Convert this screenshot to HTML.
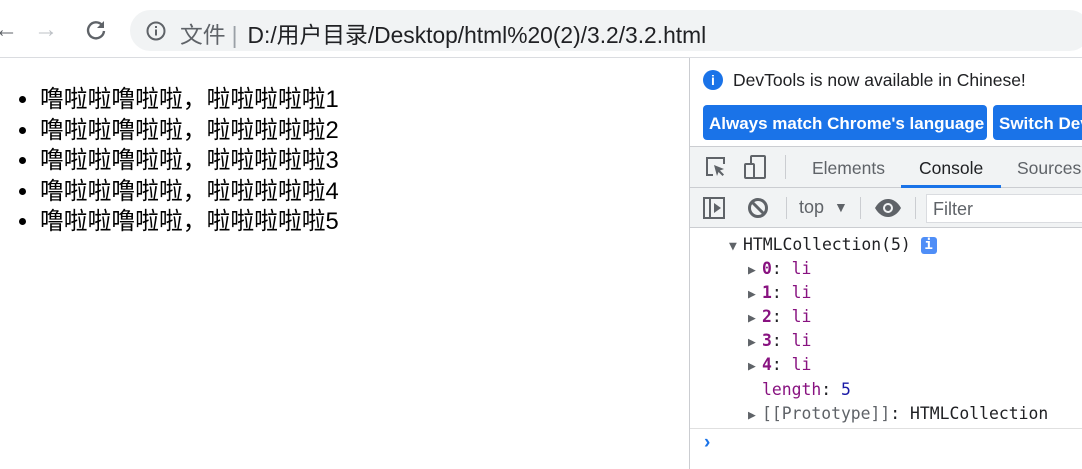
<!DOCTYPE html>
<html><head><meta charset="utf-8"><style>
*{margin:0;padding:0;box-sizing:border-box}
body{width:1082px;height:469px;overflow:hidden;background:#fff;font-family:"Liberation Sans","Noto Sans CJK SC",sans-serif;position:relative}
.abs{position:absolute}
.top{left:0;top:0;width:1082px;height:58px;background:#fff;border-bottom:1px solid #dadce0}
.pill{left:130px;top:10px;width:960px;height:41px;border-radius:21px;background:#f1f3f4}
.url{left:180px;top:17px;font-size:22.8px;color:#202124;white-space:nowrap}
ul{position:absolute;left:40px;top:85px;font-size:23.8px;line-height:30.6px;color:#000;font-family:"Liberation Sans","Noto Sans CJK SC",sans-serif}
.dt{left:689px;top:58px;width:393px;height:411px;border-left:1px solid #cbcdd1;background:#fff}
.btn{height:35px;top:105px;background:#1a73e8;color:#fff;font-weight:bold;font-size:17px;border-radius:4px;line-height:37px;padding-left:6px;white-space:nowrap;overflow:hidden}
.tabs{left:690px;top:146px;width:392px;height:42px;background:#f1f3f4;border-top:1px solid #cbcdd1;border-bottom:1px solid #cbcdd1}
.tb2{left:690px;top:188px;width:392px;height:40px;background:#f1f3f4;border-bottom:1px solid #cbcdd1}
.mono{font-family:"DejaVu Sans Mono","Liberation Mono",monospace;font-size:16.4px;color:#202124;white-space:nowrap}
.row{position:absolute;height:24px;line-height:24px}
.k{color:#881280;font-weight:bold}
.v{color:#881280}
.tri{color:#5f6368;font-size:13px;display:inline-block;width:14px}
</style></head><body>
<div class="abs top"></div>
<div class="abs" style="left:-6px;top:16px;font-size:24px;color:#5f6368">←</div>
<div class="abs" style="left:34px;top:16px;font-size:24px;color:#bdc1c6">→</div>
<svg class="abs" style="left:84px;top:18px" width="24" height="24" viewBox="0 0 24 24"><path d="M18 7A8 8 0 1 0 20 13" fill="none" stroke="#5f6368" stroke-width="2.4"/><path d="M20 3v7h-7z" fill="#5f6368"/></svg>
<div class="abs pill"></div>
<svg class="abs" style="left:145px;top:20px" width="22" height="22" viewBox="0 0 22 22"><circle cx="11" cy="11" r="8.5" fill="none" stroke="#5f6368" stroke-width="2"/><rect x="10" y="9.5" width="2" height="6" fill="#5f6368"/><rect x="10" y="6" width="2" height="2" fill="#5f6368"/></svg>
<div class="abs url"><span style="color:#5f6368">文件</span><span style="color:#9aa0a6;margin:0 10px 0 6px">|</span>D:/用户目录/Desktop/html%20(2)/3.2/3.2.html</div>
<ul><li>噜啦啦噜啦啦，啦啦啦啦啦1</li><li>噜啦啦噜啦啦，啦啦啦啦啦2</li><li>噜啦啦噜啦啦，啦啦啦啦啦3</li><li>噜啦啦噜啦啦，啦啦啦啦啦4</li><li>噜啦啦噜啦啦，啦啦啦啦啦5</li></ul>
<div class="abs dt"></div>
<div class="abs" style="left:703px;top:70px;width:20px;height:20px;border-radius:50%;background:#1a73e8;color:#fff;font-weight:bold;font-size:14px;text-align:center;line-height:20px">i</div>
<div class="abs" style="left:733px;top:70px;font-size:17.5px;color:#202124">DevTools is now available in Chinese!</div>
<div class="abs btn" style="left:703px;width:284px">Always match Chrome's language</div>
<div class="abs btn" style="left:993px;width:100px">Switch DevTools</div>
<div class="abs tabs"></div>
<svg class="abs" style="left:704px;top:155px" width="24" height="24" viewBox="0 0 24 24"><path d="M9 20H3V3h17v6" fill="none" stroke="#5f6368" stroke-width="2"/><path d="M10 10l10 4-4 1.5 4 4-1.5 1.5-4-4L13 21z" fill="#5f6368"/></svg>
<svg class="abs" style="left:743px;top:154px" width="26" height="26" viewBox="0 0 26 26"><rect x="8" y="2" width="14" height="22" rx="1" fill="none" stroke="#5f6368" stroke-width="2"/><rect x="2" y="10" width="9" height="14" rx="1" fill="#f1f3f4" stroke="#5f6368" stroke-width="2"/></svg>
<div class="abs" style="left:785px;top:155px;width:1px;height:24px;background:#cbcdd1"></div>
<div class="abs" style="left:812px;top:158px;font-size:17.5px;color:#5f6368">Elements</div>
<div class="abs" style="left:919px;top:158px;font-size:17.5px;color:#202124">Console</div>
<div class="abs" style="left:901px;top:185px;width:100px;height:3px;background:#1a73e8"></div>
<div class="abs" style="left:1017px;top:158px;font-size:17.5px;color:#5f6368">Sources</div>
<div class="abs tb2"></div>
<svg class="abs" style="left:702px;top:196px" width="24" height="24" viewBox="0 0 24 24"><rect x="2" y="2" width="20" height="20" fill="none" stroke="#5f6368" stroke-width="2"/><line x1="8" y1="2" x2="8" y2="22" stroke="#5f6368" stroke-width="2"/><path d="M12 7l7 5-7 5z" fill="#5f6368"/></svg>
<svg class="abs" style="left:746px;top:196px" width="24" height="24" viewBox="0 0 24 24"><circle cx="12" cy="12" r="8.5" fill="none" stroke="#5f6368" stroke-width="3"/><line x1="6" y1="6" x2="18" y2="18" stroke="#5f6368" stroke-width="3"/></svg>
<div class="abs" style="left:786px;top:197px;width:1px;height:22px;background:#cbcdd1"></div>
<div class="abs" style="left:799px;top:197px;font-size:18px;color:#5f6368">top</div>
<div class="abs" style="left:834px;top:199px;font-size:14px;color:#5f6368">▼</div>
<div class="abs" style="left:860px;top:197px;width:1px;height:22px;background:#cbcdd1"></div>
<svg class="abs" style="left:874px;top:197px" width="28" height="22" viewBox="0 0 28 22"><path d="M1 11C5 4 10 2 14 2s9 2 13 9c-4 7-9 9-13 9S5 18 1 11z" fill="#5f6368"/><circle cx="14" cy="11" r="5" fill="#f1f3f4"/><circle cx="14" cy="11" r="3" fill="#5f6368"/></svg>
<div class="abs" style="left:915px;top:197px;width:1px;height:22px;background:#cbcdd1"></div>
<div class="abs" style="left:926px;top:194px;width:160px;height:29px;background:#fff;border:1px solid #dadce0;font-size:18px;color:#5f6368;padding:4px 0 0 6px">Filter</div>
<div class="mono">
<div class="row" style="left:729px;top:233px"><span class="tri">▼</span>HTMLCollection(5) <span style="display:inline-block;width:16px;height:17px;background:#4f8ef7;color:#fff;border-radius:3px;text-align:center;line-height:17px;font-weight:bold;font-size:14px;vertical-align:1px">i</span></div>
<div class="row" style="left:748px;top:257px"><span class="tri">▶</span><span class="k">0</span>: <span class="v">li</span></div>
<div class="row" style="left:748px;top:281px"><span class="tri">▶</span><span class="k">1</span>: <span class="v">li</span></div>
<div class="row" style="left:748px;top:305px"><span class="tri">▶</span><span class="k">2</span>: <span class="v">li</span></div>
<div class="row" style="left:748px;top:329px"><span class="tri">▶</span><span class="k">3</span>: <span class="v">li</span></div>
<div class="row" style="left:748px;top:353px"><span class="tri">▶</span><span class="k">4</span>: <span class="v">li</span></div>
<div class="row" style="left:762px;top:378px"><span class="v">length</span>: <span style="color:#1a1aa6">5</span></div>
<div class="row" style="left:748px;top:402px"><span class="tri">▶</span><span style="color:#5f6368">[[Prototype]]</span>: HTMLCollection</div>
</div>
<div class="abs" style="left:690px;top:428px;width:392px;height:1px;background:#e0e0e0"></div>
<div class="abs" style="left:704px;top:432px;font-size:19px;font-weight:bold;color:#1a73e8">›</div>
</body></html>
